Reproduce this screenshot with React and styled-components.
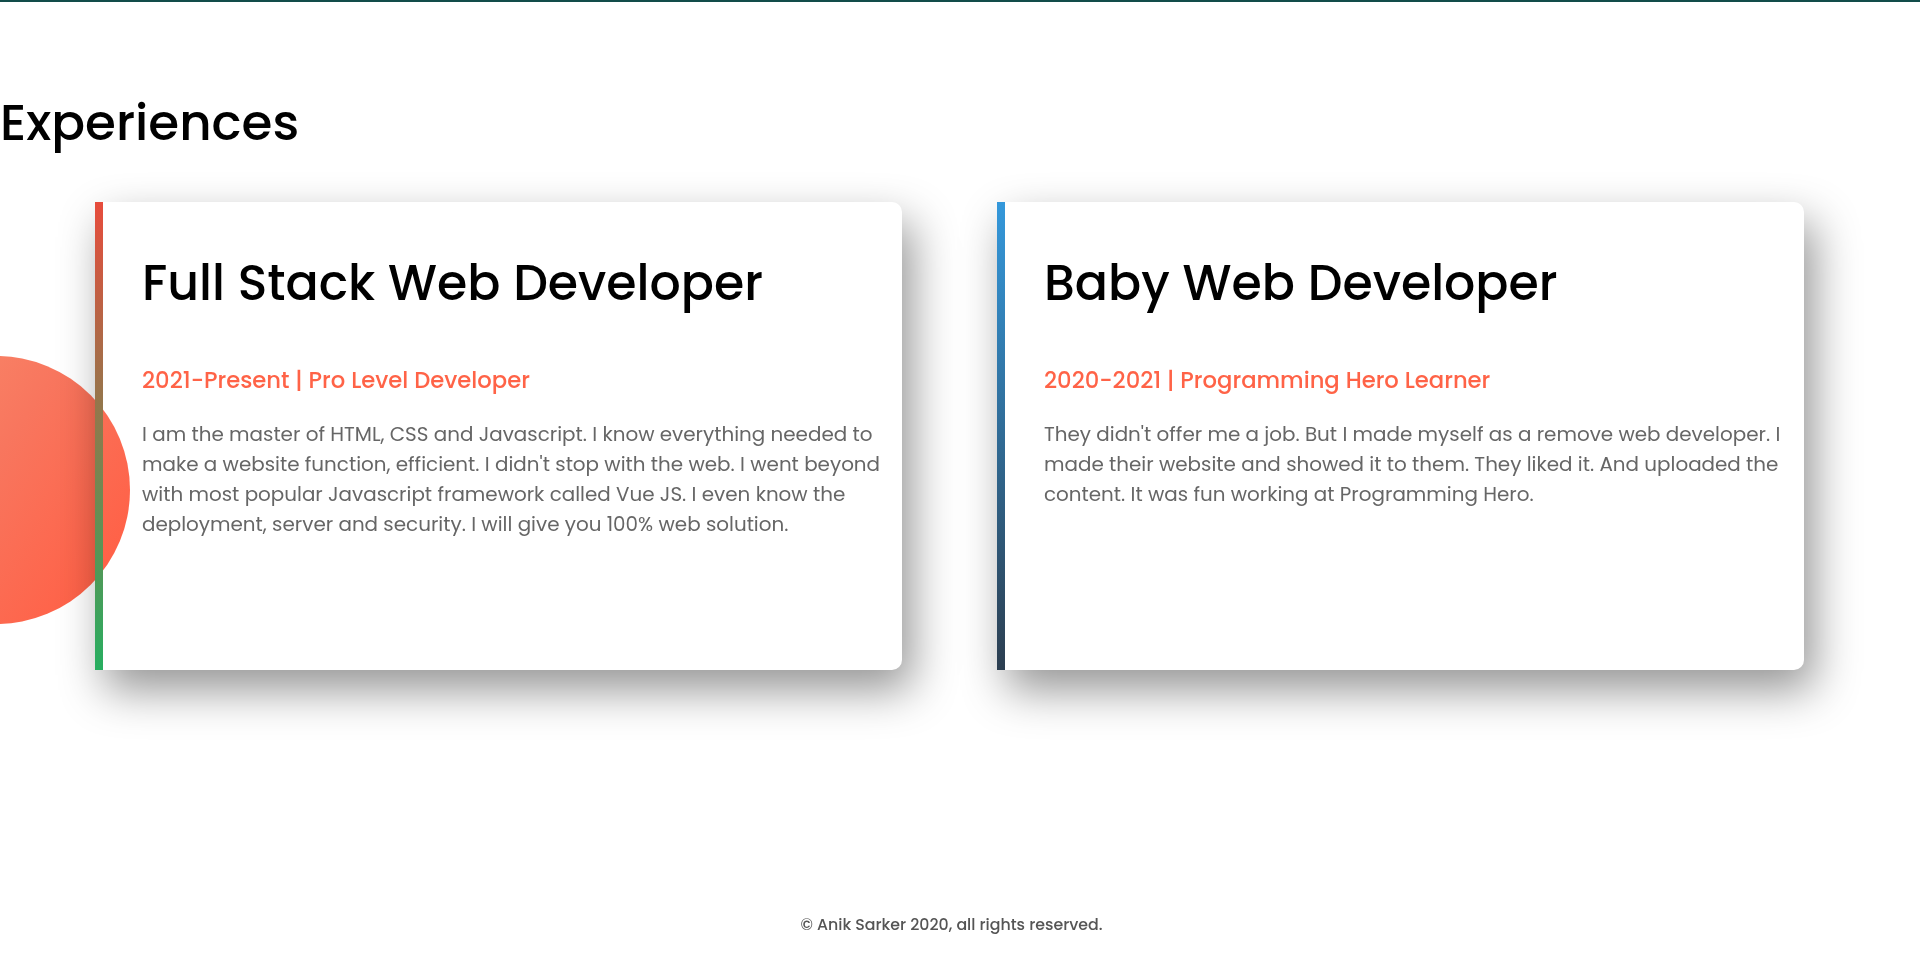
import React from "react";
import styled, { createGlobalStyle } from "styled-components";

const GlobalStyle = createGlobalStyle`
  body {
    margin: 0;
    background: #fff;
    font-family: "Poppins", "Open Sans", "Liberation Sans", sans-serif;
  }
`;

const experiences = [
  {
    title: "Full Stack Web Developer",
    meta: "2021-Present | Pro Level Developer",
    text: "I am the master of HTML, CSS and Javascript. I know everything needed to make a website function, efficient. I didn't stop with the web. I went beyond with most popular Javascript framework called Vue JS. I even know the deployment, server and security. I will give you 100% web solution.",
    from: "#e74c3c",
    to: "#27ae60",
  },
  {
    title: "Baby Web Developer",
    meta: "2020-2021 | Programming Hero Learner",
    text: "They didn't offer me a job. But I made myself as a remove web developer. I made their website and showed it to them. They liked it. And uploaded the content. It was fun working at Programming Hero.",
    from: "#3498db",
    to: "#2c3e50",
  },
];

const App = () => {
  return (
    <Page>
      <GlobalStyle />
      <Section>
        {/* 장식용 원 */}
        <Blob />
        <Heading>Experiences</Heading>

        <CardRow>
          {experiences.map((item) => (
            <Card key={item.title} $from={item.from} $to={item.to}>
              <CardTitle>{item.title}</CardTitle>
              <CardMeta>{item.meta}</CardMeta>
              <CardText>{item.text}</CardText>
            </Card>
          ))}
        </CardRow>
      </Section>

      <Footer>© Anik Sarker 2020, all rights reserved.</Footer>
    </Page>
  );
};

const Page = styled.div`
  border-top: 2px solid #124c4a;
  min-height: 952px;
  box-sizing: border-box;
  /* 스크롤바 폭만큼 */
  padding-right: 17px;
`;

const Section = styled.section`
  position: relative;
  padding-top: 90.5px;
`;

const Blob = styled.div`
  position: absolute;
  left: -138px;
  top: 354px;
  width: 268px;
  height: 268px;
  border-radius: 50%;
  background: linear-gradient(125deg, #f9906f 0%, #f8765e 45%, #ff6248 85%);
  mix-blend-mode: multiply;
  z-index: 1;
`;

const Heading = styled.h2`
  margin: 0;
  font-size: 50px;
  font-weight: 500;
  line-height: 1.2;
  color: #000;
`;

const CardRow = styled.div`
  display: flex;
  gap: 95px;
  margin-top: 49.5px;
  padding-left: 95px;
`;

const Card = styled.div`
  position: relative;
  flex: 0 0 807px;
  height: 468px;
  box-sizing: border-box;
  padding: 51.5px 12px 0 47px;
  background: #fff;
  border-radius: 0 10px 10px 0;
  box-shadow: 10px 20px 45px rgba(0, 0, 0, 0.42);

  &::before {
    content: "";
    position: absolute;
    left: 0;
    top: 0;
    bottom: 0;
    width: 8px;
    background: linear-gradient(${(p) => p.$from}, ${(p) => p.$to});
    z-index: 2;
  }
`;

const CardTitle = styled.h3`
  margin: 0;
  font-size: 49px;
  font-weight: 500;
  line-height: 1.2;
  color: #000;
`;

const CardMeta = styled.h4`
  margin: 53px 0 0;
  font-size: 22.7px;
  font-weight: 500;
  line-height: 30px;
  color: #ff6347;
`;

const CardText = styled.p`
  margin: 24px 0 0;
  font-size: 19.9px;
  line-height: 30px;
  color: #666;
`;

const Footer = styled.footer`
  margin-top: 243px;
  text-align: center;
  font-size: 15.8px;
  font-weight: 500;
  line-height: 24px;
  color: #555;
`;

export default App;
